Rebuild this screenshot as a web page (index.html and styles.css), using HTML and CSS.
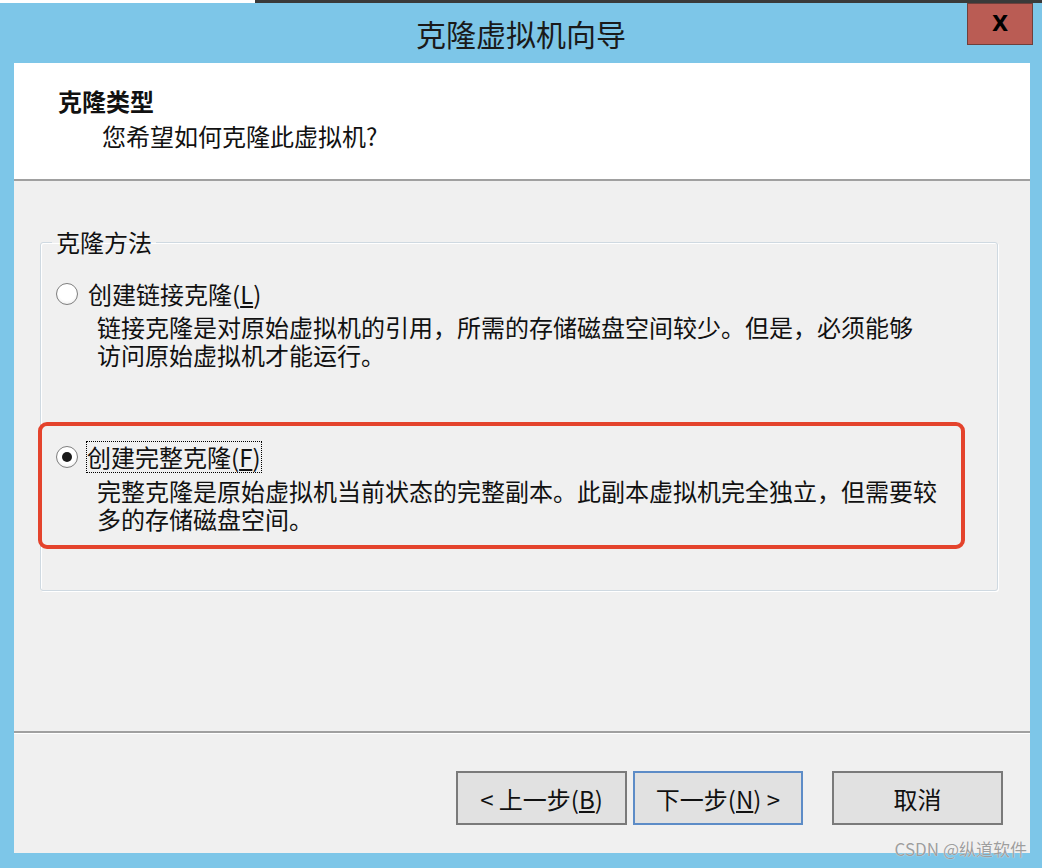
FILE: index.html
```html
<!DOCTYPE html>
<html lang="zh-CN">
<head>
<meta charset="utf-8">
<title>克隆虚拟机向导</title>
<link rel="stylesheet" href="styles.css">
</head>
<body>
<div class="topstrip"></div>
<div class="titlebar">
  <div class="spacer"></div>
  <div class="title">克隆虚拟机向导</div>
  <div class="close-wrap"><div class="close">X</div></div>
</div>
<div class="window">
  <div class="header">
    <div class="heading">克隆类型</div>
    <div class="subtitle">您希望如何克隆此虚拟机?</div>
  </div>
  <div class="content">
    <fieldset class="group">
      <legend>克隆方法</legend>
      <div class="option first">
        <div class="option-row">
          <span class="radio"></span>
          <span class="label">创建链接克隆(<u>L</u>)</span>
        </div>
        <div class="desc">
          <div class="line">链接克隆是对原始虚拟机的引用，所需的存储磁盘空间较少。但是，必须能够</div>
          <div class="line">访问原始虚拟机才能运行。</div>
        </div>
      </div>
      <div class="highlight">
        <div class="option">
          <div class="option-row">
            <span class="radio checked"></span>
            <span class="label focus">创建完整克隆(<u>F</u>)</span>
          </div>
          <div class="desc">
            <div class="line">完整克隆是原始虚拟机当前状态的完整副本。此副本虚拟机完全独立，但需要较</div>
            <div class="line">多的存储磁盘空间。</div>
          </div>
        </div>
      </div>
    </fieldset>
  </div>
  <div class="footer">
    <button class="btn">&lt; 上一步(<u>B</u>)</button>
    <button class="btn default">下一步(<u>N</u>) &gt;</button>
    <button class="btn cancel">取消</button>
  </div>
</div>
<div class="watermark">CSDN @纵道软件</div>
</body>
</html>
```
FILE: styles.css
```css
html, body {
  margin: 0;
  padding: 0;
}
body {
  width: 1042px;
  height: 868px;
  overflow: hidden;
  background: #7dc6e8;
  font-family: "Noto Sans CJK SC", "Noto Sans", sans-serif;
  color: #111;
  position: relative;
}
.topstrip {
  height: 3px;
  background: linear-gradient(to right, #ffffff 0 255px, #3a3a3a 255px);
}
.titlebar {
  height: 60px;
  display: grid;
  grid-template-columns: 1fr auto 1fr;
  align-items: center;
}
.title {
  font-size: 30px;
  line-height: 40px;
  color: #1a1a1a;
  margin-top: -1px;
}
.close-wrap {
  display: flex;
  justify-content: flex-end;
  align-self: start;
  padding-right: 9px;
}
.close {
  width: 64px;
  height: 40px;
  background: #ba5c54;
  border: 1px solid #6e3f3b;
  display: flex;
  align-items: center;
  justify-content: center;
  font-family: "DejaVu Sans", "Liberation Sans", sans-serif;
  font-weight: bold;
  font-size: 21px;
  color: #000;
}
.window {
  margin: 0 12px 0 14px;
  height: 790px;
  background: #f0f0f0;
  display: flex;
  flex-direction: column;
}
.header {
  height: 92px;
  background: #ffffff;
  border-bottom: 2px solid #a0a0a0;
  padding: 24px 0 0 44px;
  flex: none;
}
.heading {
  font-size: 24px;
  line-height: 28px;
  font-weight: bold;
}
.subtitle {
  font-size: 24px;
  line-height: 28px;
  margin: 7px 0 0 44px;
}
.content {
  flex: 1;
  padding: 47px 32px 0 26px;
}
.group {
  margin: 0;
  padding: 0 0 41px 0;
  border: 1px solid #cfd9e1;
  border-radius: 3px;
  box-shadow: inset 1px 1px 0 #ffffff, 1px 1px 0 #ffffff;
  min-width: 0;
}
.group legend {
  margin-left: 11px;
  padding: 0 4px;
  font-size: 24px;
  line-height: 28px;
}
.option {
  font-size: 24px;
  line-height: 28px;
}
.option.first {
  padding: 24px 0 0 15px;
}
.option-row {
  display: flex;
  align-items: center;
}
.radio {
  width: 22px;
  height: 22px;
  border-radius: 50%;
  border: 1px solid #7f7f7f;
  background: radial-gradient(circle at 50% 40%, #ffffff 0 55%, #e2e2e2 100%);
  box-sizing: border-box;
  margin-right: 10px;
  flex: none;
  display: flex;
  align-items: center;
  justify-content: center;
}
.radio.checked::after {
  content: "";
  width: 10px;
  height: 10px;
  border-radius: 50%;
  background: #1a1a1a;
}
.label u, .btn u {
  text-decoration: underline;
  text-underline-offset: 2px;
}
.label.focus {
  outline: 1px dotted #000;
  outline-offset: 0;
  padding: 1px 0;
  margin-left: -1px;
}
.desc {
  margin: 5px 0 0 41px;
  white-space: nowrap;
}
.line {
  height: 28px;
}
.highlight {
  margin: 53px 32px 0 -3px;
  border: 4px solid #e4432c;
  border-radius: 9px;
  padding: 16px 0 12px 14px;
}
.footer {
  flex: none;
  height: 82px;
  border-top: 2px solid #a0a0a0;
  box-shadow: inset 0 1px 0 #ffffff;
  padding: 38px 27px 0 0;
  display: flex;
  justify-content: flex-end;
  align-items: flex-start;
}
.btn {
  width: 171px;
  height: 54px;
  margin: 0;
  border: 2px solid #7a7a7a;
  background: #e1e1e1;
  font-family: "Noto Sans CJK SC", "Noto Sans", sans-serif;
  font-size: 24px;
  color: #111;
  padding: 0;
  border-radius: 0;
}
.btn.default {
  width: 170px;
  margin-left: 6px;
  border-color: #5d8cc7;
}
.btn.cancel {
  margin-left: 29px;
}
.watermark {
  position: absolute;
  right: 15px;
  bottom: 8px;
  font-family: "Noto Sans CJK SC", "Noto Sans", sans-serif;
  font-size: 17px;
  line-height: 22px;
  color: #9e9e9e;
  text-shadow: 0 0 1px #ffffff;
}
```
